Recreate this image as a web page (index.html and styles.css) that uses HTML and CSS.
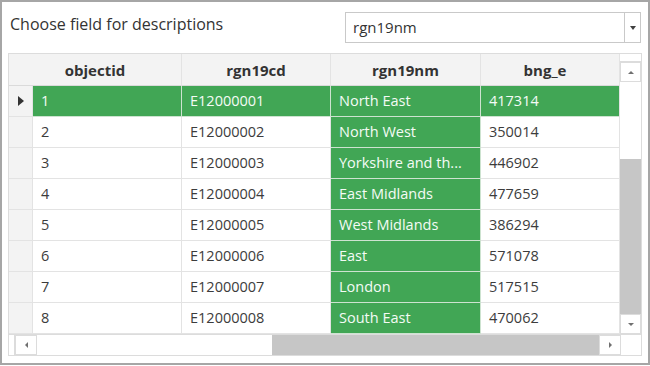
FILE: index.html
```html
<!DOCTYPE html>
<html lang="en">
<head>
    <meta charset="UTF-8">
    <title>Choose field for descriptions</title>
    <link rel="stylesheet" href="styles.css">
</head>
<body>
    <div class="window">
        <div class="top-bar">
            <label class="field-label" for="fieldSelect">Choose field for descriptions</label>
            <div class="combo" id="fieldSelect">
                <span class="combo-text">rgn19nm</span>
                <span class="combo-button"><span class="tri tri-down"></span></span>
            </div>
        </div>

        <div class="grid">
            <div class="grid-body">
                <div class="table">
                    <div class="row header-row">
                        <div class="cell head first">objectid</div>
                        <div class="cell head c2">rgn19cd</div>
                        <div class="cell head c3">rgn19nm</div>
                        <div class="cell head c4">bng_e</div>
                    </div>
                    <div class="row selected">
                        <div class="cell rowhead"><span class="tri tri-right"></span></div>
                        <div class="cell c1 green">1</div>
                        <div class="cell c2 green">E12000001</div>
                        <div class="cell c3 green">North East</div>
                        <div class="cell c4 green">417314</div>
                    </div>
                    <div class="row">
                        <div class="cell rowhead"></div>
                        <div class="cell c1">2</div>
                        <div class="cell c2">E12000002</div>
                        <div class="cell c3 green">North West</div>
                        <div class="cell c4">350014</div>
                    </div>
                    <div class="row">
                        <div class="cell rowhead"></div>
                        <div class="cell c1">3</div>
                        <div class="cell c2">E12000003</div>
                        <div class="cell c3 green">Yorkshire and th...</div>
                        <div class="cell c4">446902</div>
                    </div>
                    <div class="row">
                        <div class="cell rowhead"></div>
                        <div class="cell c1">4</div>
                        <div class="cell c2">E12000004</div>
                        <div class="cell c3 green">East Midlands</div>
                        <div class="cell c4">477659</div>
                    </div>
                    <div class="row">
                        <div class="cell rowhead"></div>
                        <div class="cell c1">5</div>
                        <div class="cell c2">E12000005</div>
                        <div class="cell c3 green">West Midlands</div>
                        <div class="cell c4">386294</div>
                    </div>
                    <div class="row">
                        <div class="cell rowhead"></div>
                        <div class="cell c1">6</div>
                        <div class="cell c2">E12000006</div>
                        <div class="cell c3 green">East</div>
                        <div class="cell c4">571078</div>
                    </div>
                    <div class="row">
                        <div class="cell rowhead"></div>
                        <div class="cell c1">7</div>
                        <div class="cell c2">E12000007</div>
                        <div class="cell c3 green">London</div>
                        <div class="cell c4">517515</div>
                    </div>
                    <div class="row">
                        <div class="cell rowhead"></div>
                        <div class="cell c1">8</div>
                        <div class="cell c2">E12000008</div>
                        <div class="cell c3 green">South East</div>
                        <div class="cell c4">470062</div>
                    </div>
                </div>

                <div class="vscroll">
                    <div class="vs-cap"></div>
                    <div class="sb-button"><span class="tri tri-up"></span></div>
                    <div class="vs-thumb"></div>
                    <div class="vs-track"></div>
                    <div class="sb-button"><span class="tri tri-down small"></span></div>
                </div>
            </div>

            <div class="hscroll">
                <div class="hs-cap"></div>
                <div class="sb-button wide"><span class="tri tri-left"></span></div>
                <div class="hs-thumb"></div>
                <div class="hs-track"></div>
                <div class="sb-button wide"><span class="tri tri-right small"></span></div>
                <div class="hs-corner"></div>
            </div>
        </div>
    </div>
</body>
</html>
```

FILE: styles.css
```css
/* General */
body {
    margin: 0;
    font-family: 'Open Sans', 'Noto Sans', sans-serif;
    font-size: 14.5px;
    color: #3c3c3c;
    background-color: #ffffff;
}

.window {
    width: 650px;
    height: 365px;
    box-sizing: border-box;
    border: 2px solid #a6a6a6;
    padding: 10px 7px 0 6px;
}

/* Top bar */
.top-bar {
    display: flex;
    justify-content: space-between;
    align-items: flex-start;
    height: 41px;
}

.field-label {
    font-size: 16px;
    color: #333;
    margin: 1px 0 0 2px;
}

.combo {
    display: flex;
    width: 296px;
    height: 31px;
    box-sizing: border-box;
    border: 1px solid #c9c9c9;
}

.combo-text {
    flex: 1;
    padding: 4px 0 0 7px;
    font-size: 15px;
    color: #333;
}

.combo-button {
    width: 15px;
    border-left: 1px solid #c9c9c9;
    display: flex;
    align-items: center;
    justify-content: center;
}

/* Grid */
.grid {
    width: 634px;
    box-sizing: border-box;
    border: 1px solid #dcdcdc;
}

.grid-body {
    display: flex;
}

.table {
    width: 610px;
}

.row {
    display: flex;
    height: 31px;
}

.cell {
    box-sizing: border-box;
    height: 31px;
    border-right: 1px solid #e3e3e3;
    border-bottom: 1px solid #e3e3e3;
    padding: 0 0 0 8px;
    line-height: 30px;
    white-space: nowrap;
    overflow: hidden;
}

.header-row {
    height: 32px;
    background-color: #f3f3f3;
}

.head {
    height: 32px;
    line-height: 32px;
    background-color: #f3f3f3;
    font-size: 15px;
    font-weight: bold;
    text-align: center;
    color: #333;
    padding: 0;
    border-bottom: 1px solid #dadada;
}

.head.first { width: 173px; }
.head.c4 { padding-right: 10px; }

.rowhead {
    width: 24px;
    background-color: #f3f3f3;
    padding: 0;
    display: flex;
    align-items: center;
    justify-content: center;
}

.c1 { width: 149px; }
.c2 { width: 149px; }
.c3 { width: 150px; }
.c4 { width: 138px; border-right: none; }

.green {
    background-color: #41a655;
    color: #f4fbf5;
    border-color: #cde3d0;
}

/* Scrollbars */
.vscroll {
    width: 22px;
    display: flex;
    flex-direction: column;
    box-sizing: border-box;
    border-left: 1px solid #e3e3e3;
}

.vs-cap {
    height: 6px;
    border-bottom: 1px solid #dcdcdc;
    margin-top: 1px;
}

.sb-button {
    height: 20px;
    box-sizing: border-box;
    border: 1px solid #dcdcdc;
    display: flex;
    align-items: center;
    justify-content: center;
    background-color: #ffffff;
}

.vs-thumb {
    height: 77px;
    background-color: #ffffff;
}

.vs-track {
    flex: 1;
    background-color: #c6c6c6;
}

.hscroll {
    display: flex;
    height: 20px;
    border-top: 1px solid #dcdcdc;
}

.hs-cap {
    width: 5px;
    border-right: 1px solid #dcdcdc;
}

.sb-button.wide {
    width: 22px;
    height: 20px;
}

.hs-thumb {
    width: 235px;
    background-color: #ffffff;
}

.hs-track {
    flex: 1;
    background-color: #c6c6c6;
}

.hs-corner {
    width: 20px;
    background-color: #ffffff;
}

/* Triangles */
.tri {
    width: 0;
    height: 0;
    display: inline-block;
}

.tri-down {
    border-left: 3px solid transparent;
    border-right: 3px solid transparent;
    border-top: 4px solid #404040;
}

.tri-up {
    border-left: 3px solid transparent;
    border-right: 3px solid transparent;
    border-bottom: 3px solid #707070;
}

.tri-down.small {
    border-top: 3px solid #707070;
}

.tri-right {
    border-top: 5px solid transparent;
    border-bottom: 5px solid transparent;
    border-left: 6px solid #333;
}

.tri-right.small {
    border-top: 3px solid transparent;
    border-bottom: 3px solid transparent;
    border-left: 3px solid #707070;
}

.tri-left {
    border-top: 3px solid transparent;
    border-bottom: 3px solid transparent;
    border-right: 3px solid #707070;
}
```
